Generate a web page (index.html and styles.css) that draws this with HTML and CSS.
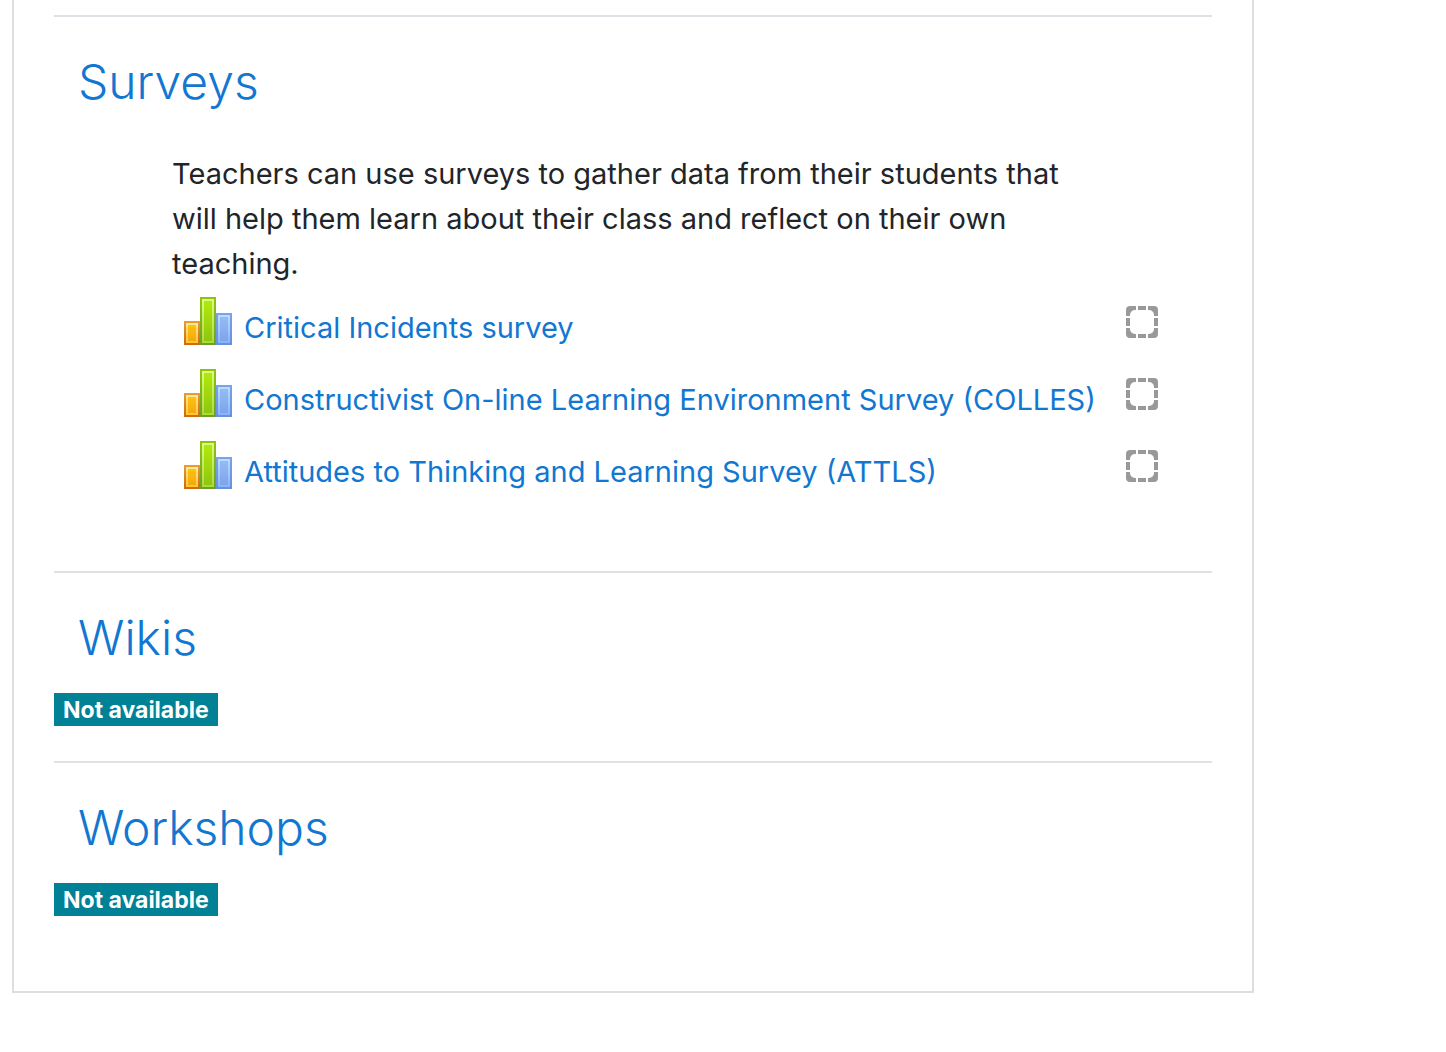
FILE: index.html
```html
<!DOCTYPE html>
<html lang="en">
<head>
<meta charset="utf-8">
<meta name="viewport" content="width=device-width, initial-scale=1">
<title>Course sections</title>
<link rel="stylesheet" href="styles.css">
</head>
<body>
<svg class="defs" aria-hidden="true">
  <defs>
    <linearGradient id="orange-edge" x1="0" y1="0" x2="0" y2="1"><stop offset="0" stop-color="#e99d2b"/><stop offset="1" stop-color="#cd6a12"/></linearGradient>
    <linearGradient id="orange-rim" x1="0" y1="0" x2="0" y2="1"><stop offset="0" stop-color="#ffe9a0"/><stop offset="1" stop-color="#ffc62c"/></linearGradient>
    <linearGradient id="orange-fill" x1="0" y1="0" x2="0" y2="1"><stop offset="0" stop-color="#ffc40c"/><stop offset="1" stop-color="#f5a70f"/></linearGradient>
    <linearGradient id="green-edge" x1="0" y1="0" x2="0" y2="1"><stop offset="0" stop-color="#8fc60b"/><stop offset="1" stop-color="#6f9f2c"/></linearGradient>
    <linearGradient id="green-rim" x1="0" y1="0" x2="0" y2="1"><stop offset="0" stop-color="#dcfa8a"/><stop offset="1" stop-color="#a9dc3a"/></linearGradient>
    <linearGradient id="green-fill" x1="0" y1="0" x2="0" y2="1"><stop offset="0" stop-color="#b1e90c"/><stop offset="1" stop-color="#8fc60f"/></linearGradient>
    <linearGradient id="blue-edge" x1="0" y1="0" x2="0" y2="1"><stop offset="0" stop-color="#76a2f0"/><stop offset="1" stop-color="#698fda"/></linearGradient>
    <linearGradient id="blue-rim" x1="0" y1="0" x2="0" y2="1"><stop offset="0" stop-color="#b9dfff"/><stop offset="1" stop-color="#85b4ff"/></linearGradient>
    <linearGradient id="blue-fill" x1="0" y1="0" x2="0" y2="1"><stop offset="0" stop-color="#94bbf5"/><stop offset="1" stop-color="#7ea4ea"/></linearGradient>
  </defs>
  <symbol id="survey" viewBox="0 0 48 48">
    <path fill="url(#orange-edge)" d="M0 24h16v24H0z"/><path fill="url(#orange-rim)" d="M2 26h12v20H2z"/><path fill="url(#orange-fill)" d="M4 28h8v16H4z"/>
    <path fill="url(#blue-edge)" d="M32 16h16v32H32z"/><path fill="url(#blue-rim)" d="M34 18h12v28H34z"/><path fill="url(#blue-fill)" d="M36 20h8v24h-8z"/>
    <path fill="url(#green-edge)" d="M16 0h16v48H16z"/><path fill="url(#green-rim)" d="M18 2h12v44H18z"/><path fill="url(#green-fill)" d="M20 4h8v40h-8z"/>
  </symbol>
  <symbol id="incomplete" viewBox="0 0 32 32">
    <g fill="#999">
      <path d="M4 0h6v4H9a5 5 0 0 0-5 5v1H0V4a4 4 0 0 1 4-4z"/>
      <path d="M22 0h6a4 4 0 0 1 4 4v6h-4V9a5 5 0 0 0-5-5h-1z"/>
      <path d="M0 22h4v1a5 5 0 0 0 5 5h1v4H4a4 4 0 0 1-4-4z"/>
      <path d="M28 22h4v6a4 4 0 0 1-4 4h-6v-4h1a5 5 0 0 0 5-5z"/>
      <path d="M12 0h8v4h-8zM12 28h8v4h-8zM0 12h4v8H0zM28 12h4v8h-4z"/>
    </g>
  </symbol>
</svg>
<main class="course">
  <section class="topic">
    <h3 class="topic-name"><a href="#surveys">Surveys</a></h3>
    <div class="topic-body">
      <p class="summary">Teachers can use surveys to gather data from their students that will help them learn about their class and reflect on their own teaching.</p>
      <ul class="activities">
        <li class="activity">
          <a class="activity-link" href="#critical"><svg class="activity-icon" aria-hidden="true"><use href="#survey"/></svg><span class="activity-name">Critical Incidents survey</span></a>
          <svg class="completion" role="img" aria-label="Not completed"><use href="#incomplete"/></svg>
        </li>
        <li class="activity">
          <a class="activity-link" href="#colles"><svg class="activity-icon" aria-hidden="true"><use href="#survey"/></svg><span class="activity-name">Constructivist On-line Learning Environment Survey (COLLES)</span></a>
          <svg class="completion" role="img" aria-label="Not completed"><use href="#incomplete"/></svg>
        </li>
        <li class="activity">
          <a class="activity-link" href="#attls"><svg class="activity-icon" aria-hidden="true"><use href="#survey"/></svg><span class="activity-name">Attitudes to Thinking and Learning Survey (ATTLS)</span></a>
          <svg class="completion" role="img" aria-label="Not completed"><use href="#incomplete"/></svg>
        </li>
      </ul>
    </div>
  </section>
  <section class="topic">
    <h3 class="topic-name"><a href="#wikis">Wikis</a></h3>
    <span class="badge">Not available</span>
  </section>
  <section class="topic">
    <h3 class="topic-name"><a href="#workshops">Workshops</a></h3>
    <span class="badge">Not available</span>
  </section>
</main>
</body>
</html>
```
FILE: styles.css
```css
* { box-sizing: border-box; }

body {
  margin: 0;
  padding: 0 192px 56px 12px;
  background: #fff;
  color: #212529;
  font: 400 29px/45px Inter, "Liberation Sans", sans-serif;
}

a { color: #1177d1; text-decoration: none; }
a:hover { text-decoration: underline; }

.defs { position: absolute; width: 0; height: 0; }

.course {
  padding: 15px 40px 40px;
  border: 2px solid #dedede;
  border-top: 0;
}

.topic {
  display: flex;
  flex-direction: column;
  align-items: flex-start;
  padding: 34px 0 35px;
  border-top: 2px solid #dee2e6;
}

.topic-name {
  margin: 0 24px 24px;
  font-size: 48px;
  font-weight: 300;
  line-height: 62px;
}

.topic-body {
  align-self: stretch;
  padding: 14px 54px 34px 118px;
}

.summary { margin: 0 80px 0 0; }

.activities { margin: 0; padding: 0; list-style: none; }

.activity {
  display: flex;
  justify-content: space-between;
  align-items: flex-start;
  gap: 16px;
  min-height: 72px;
  padding: 11px 0 0 12px;
}

.activity-link { display: flex; gap: 12px; }
.activity-icon { flex: none; width: 48px; height: 48px; }
.activity-name { padding-top: 8px; }

.completion {
  flex: none;
  width: 32px;
  height: 32px;
  margin-top: 9px;
}

.badge {
  padding: 6px 9px 4px;
  background: #008196;
  color: #fff;
  font-size: 23px;
  font-weight: 700;
  line-height: 23px;
}
```
